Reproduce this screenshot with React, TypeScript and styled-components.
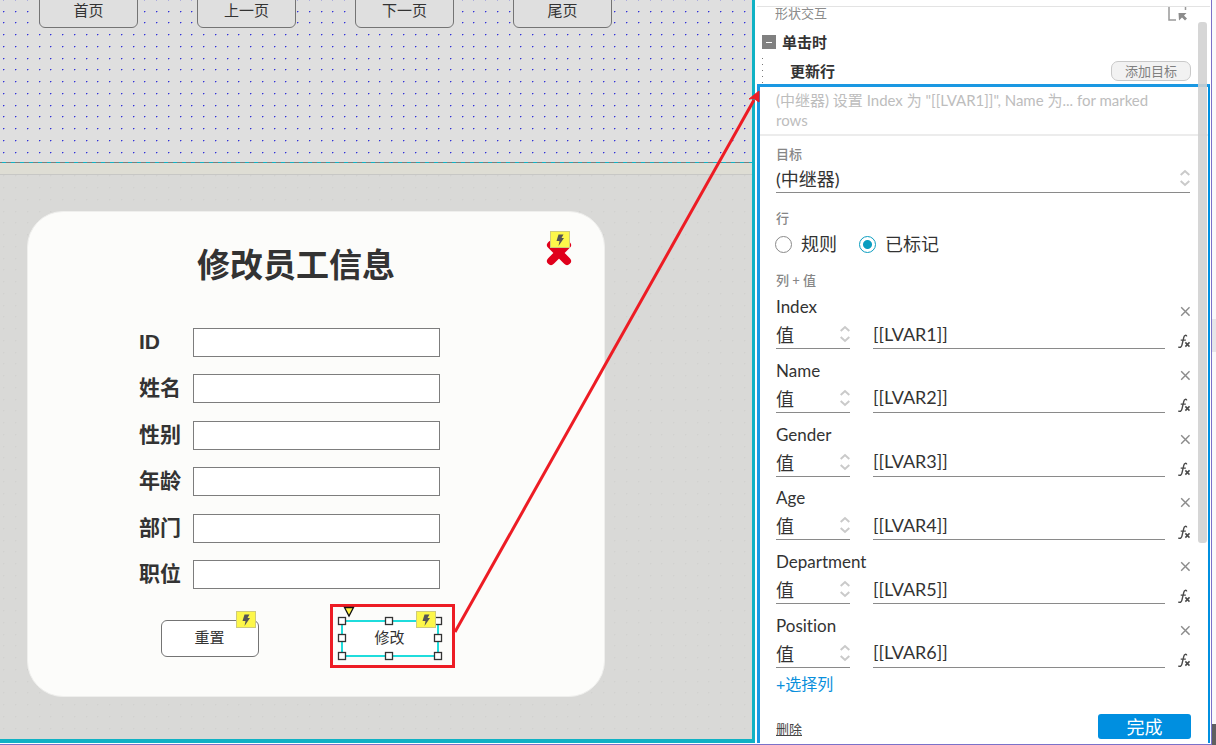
import React from "react";
import styled, { createGlobalStyle } from "styled-components";

const Global = createGlobalStyle`
  * { box-sizing: border-box; }
  body { margin: 0; background: #fff; color: #333; font-family: "Liberation Sans", "Noto Sans CJK SC", sans-serif; }
  button, input, select { font: inherit; color: inherit; margin: 0; padding: 0; }
  h1, h2, h3, p { margin: 0; }
`;

const Shell = styled.div`
  display: flex;
  min-height: 100vh;
`;

const Window = styled.div`
  position: relative;
  flex: 1;
  min-width: 0;
  display: flex;
  padding-bottom: 1px;
  border-right: 1px solid #7b72c9;
  border-bottom: 1px solid #7b72c9;
`;

/* ---------- canvas ---------- */

const Canvas = styled.main`
  position: relative;
  flex: 1;
  min-width: 0;
  display: flex;
  flex-direction: column;
  border-right: 3px solid #10b2c4;
  border-bottom: 4px solid #10b2c4;
  background: #d9d9d7;
`;

const PageArea = styled.section`
  position: relative;
  height: 162px;
  background: #dfdfdf;
`;

const Dots = styled.svg`
  position: absolute;
  inset: 0;
  width: 100%;
  height: 100%;
`;

const Pager = styled.nav`
  position: relative;
  display: flex;
  gap: 59px;
  margin-left: 39px;
  height: 28px;
  align-items: flex-end;
  overflow: hidden;
`;

const CanvasButton = styled.button<{ $selected?: boolean; $page?: boolean }>`
  flex: none;
  width: ${(p) => (p.$page ? 99 : 98)}px;
  height: 37px;
  border: ${(p) => (p.$selected ? "2px solid #1fdcdc" : "1px solid #747474")};
  border-radius: ${(p) => (p.$selected ? 0 : 6)}px;
  background: ${(p) => (p.$page ? "#dfdfdf" : "#fff")};
  font-size: 15px;
  line-height: 20px;
  padding: ${(p) => (p.$page ? "2px 0 0" : "0 1px 2px 0")};
`;

const Guide = styled.svg`
  display: block;
  width: 100%;
  height: 1px;
`;

const Strip = styled.div`
  height: 12px;
  background: #deddd4;
  border-bottom: 1px solid #c7c7c5;
`;

const Backdrop = styled.section`
  position: relative;
  flex: 1;
  padding: 36px 20px 42px 27px;
`;

const Card = styled.form`
  position: relative;
  width: 578px;
  padding: 31px 0 39px 111px;
  border: 1px solid #efefed;
  border-radius: 36px;
  background: #fcfcfa;
`;

const CardTitle = styled.h1`
  margin-left: 58px;
  padding-top: 1px;
  font-size: 33px;
  line-height: 44px;
  font-weight: 700;
`;

const Fields = styled.div`
  display: flex;
  flex-direction: column;
  justify-content: space-between;
  height: 261px;
  margin-top: 40px;
`;

const FieldRow = styled.div`
  display: flex;
  align-items: center;
`;

const FieldLabel = styled.label`
  width: 54px;
  padding-bottom: 1px;
  font-size: 21px;
  line-height: 28px;
  font-weight: 700;
`;

const FieldInput = styled.input`
  width: 247px;
  height: 29px;
  border: 1px solid #7d7d7d;
  background: #fff;
  padding: 0 6px;
`;

const Actions = styled.div`
  display: flex;
  gap: 82px;
  margin: 31px 0 0 22px;
`;

const Slot = styled.div`
  position: relative;
`;

const Bolt = styled.span`
  position: absolute;
  top: -9px;
  right: 3px;
  display: flex;
  align-items: center;
  justify-content: center;
  width: 20px;
  height: 17px;
  border: 1px solid #cfcb7a;
  background: #fdf74a;
`;

const CloseButton = styled.button`
  position: absolute;
  top: 28px;
  right: 31px;
  width: 28px;
  height: 28px;
  border: 0;
  background: none;

  > svg { display: block; }
`;

const Handles = styled.svg`
  position: absolute;
  left: -11px;
  top: -16px;
`;

const Arrow = styled.svg`
  position: absolute;
  right: 448px;
  top: 0;
  pointer-events: none;
`;

/* ---------- interaction panel ---------- */

const Panel = styled.aside`
  position: relative;
  flex: none;
  width: 456px;
  padding: 0 1px 0 2px;
  display: flex;
  flex-direction: column;
  background: #fff;
  font-family: Lato, "Noto Sans CJK SC", sans-serif;
  font-variant-ligatures: none;
`;

const PanelTop = styled.div`
  height: 7px;
  border-bottom: 1px solid #e3e3e3;
`;

const PanelTitle = styled.header`
  display: flex;
  align-items: flex-start;
  justify-content: space-between;
  height: 21px;
  padding: 0 23px 0 18px;

  h2 {
    font-size: 13px;
    line-height: 12px;
    font-weight: 400;
    color: #8c8c8c;
  }
`;

const EventRow = styled.div`
  display: flex;
  align-items: center;
  gap: 6px;
  height: 28px;
  padding-left: 5px;

  h3 { font-size: 15px; line-height: 20px; }
`;

const Collapse = styled.button`
  display: flex;
  align-items: center;
  justify-content: center;
  width: 14px;
  height: 14px;
  border: 0;
  background: #808080;
`;

const ActionRow = styled.div`
  display: flex;
  align-items: center;
  justify-content: space-between;
  height: 28px;
  margin-left: 5px;
  padding: 2px 19px 0 28px;
  background: repeating-linear-gradient(transparent 0 2px, #777 2px 3px, transparent 3px 6px) left top / 1px 100% no-repeat;

  h3 { font-size: 15px; line-height: 20px; }
`;

const AddTarget = styled.button`
  width: 80px;
  height: 20px;
  border: 1px solid #c9c9c9;
  border-radius: 7px;
  background: #f2f2f2;
  color: #808080;
  font-size: 13px;
  line-height: 16px;
`;

const ActionBox = styled.section`
  flex: 1;
  display: flex;
  flex-direction: column;
  border-top: 3px solid #1a98e2;
  border-left: 3px solid #1a98e2;
  border-right: 2px solid #0090e0;
`;

const Summary = styled.p`
  padding: 3px 28px 4px 16px;
  border-bottom: 2px solid #ececec;
  color: #bdbdbd;
  font-size: 15px;
  line-height: 20px;
`;

const Body = styled.div`
  flex: 1;
  display: flex;
  flex-direction: column;
  padding: 9px 18px 4px 16px;
`;

const Caption = styled.label<{ $top?: number }>`
  display: block;
  margin-top: ${(p) => p.$top ?? 0}px;
  font-size: 13px;
  line-height: 18px;
  font-weight: 500;
  color: #868686;
`;

const SelectWrap = styled.div<{ $width?: number }>`
  position: relative;
  display: flex;
  width: ${(p) => (p.$width ? `${p.$width}px` : "auto")};
  border-bottom: 1px solid #8a8a8a;

  svg { position: absolute; right: 0; top: 6px; pointer-events: none; }
`;

const Select = styled.select`
  flex: 1;
  min-width: 0;
  height: 29px;
  padding-top: 3px;
  appearance: none;
  border: 0;
  background: none;
  font-size: 18px;
  line-height: 26px;
`;

const Radios = styled.div`
  display: flex;
  gap: 22px;
  margin: 5px 0 0 -1px;
`;

const RadioLabel = styled.label`
  display: flex;
  align-items: center;
  gap: 9px;
  font-size: 18px;
  line-height: 24px;
`;

const Radio = styled.input`
  appearance: none;
  width: 17px;
  height: 17px;
  border: 1px solid #8a8a8a;
  border-radius: 50%;

  &:checked {
    border-color: #0a9dc0;
    background: radial-gradient(circle, #0a9dc0 4px, transparent 5px);
  }
`;

const Columns = styled.div`
  display: flex;
  flex-direction: column;
  justify-content: space-between;
  height: 372px;
  margin-top: 7px;
`;

const ColumnRow = styled.div`
  display: flex;
  align-items: flex-end;
  height: 53px;
`;

const ColumnLeft = styled.div`
  margin-right: 23px;
  width: 74px;
`;

const ColumnName = styled.label`
  display: block;
  margin-bottom: 2px;
  font-size: 17px;
  line-height: 21px;
`;

const ValueInput = styled.input`
  flex: 1;
  min-width: 0;
  height: 30px;
  border: 0;
  border-bottom: 1px solid #8a8a8a;
  background: none;
  font-size: 18px;
`;

const Tools = styled.div`
  display: flex;
  flex-direction: column;
  justify-content: space-between;
  height: 46px;
  margin-left: 12px;
`;

const IconButton = styled.button`
  display: flex;
  width: 13px;
  border: 0;
  background: none;
`;

const AddColumn = styled.button`
  align-self: flex-start;
  margin-top: 6px;
  border: 0;
  background: none;
  color: #0a8fdc;
  font-size: 16px;
  line-height: 20px;
`;

const Footer = styled.footer`
  display: flex;
  align-items: flex-end;
  justify-content: space-between;
  margin: auto -1px 0 0;
`;

const Delete = styled.a`
  padding-bottom: 2px;
  color: #444;
  font-size: 13px;
  line-height: 16px;
`;

const Done = styled.button`
  width: 93px;
  height: 25px;
  border: 0;
  border-radius: 3px;
  background: #008fe0;
  color: #fff;
  font-size: 18px;
  line-height: 24px;
`;

const ScrollThumb = styled.div`
  position: absolute;
  top: 22px;
  right: 4px;
  width: 9px;
  height: 521px;
  border-radius: 3px;
  background: rgba(208, 208, 208, 0.88);
`;

const Edge = styled.div`
  flex: none;
  display: flex;
  flex-direction: column;
  justify-content: space-between;
  width: 4px;
  padding-top: 319px;
  background: #fafafa;
`;

const EdgeBlock = styled.div<{ $height: number; $color: string }>`
  height: ${(p) => p.$height}px;
  background: ${(p) => p.$color};
`;

const BoltBadge = () => (
  <Bolt>
    <svg width="10" height="12" viewBox="0 0 10 12" aria-hidden="true">
      <path d="M3.500 0.500H8.500L6.500 4H9L3.500 12L4.500 7H1.500Z" fill="#555" />
    </svg>
  </Bolt>
);

const Chevrons = () => (
  <svg width="10" height="18" viewBox="0 0 10 18" fill="none" stroke="#cacaca" strokeWidth="2" aria-hidden="true">
    <path d="M.7 6L5 2L9.300 6M.7 12L5 16L9.300 12" />
  </svg>
);

const DotGrid = ({ id, color, top }: { id: string; color: string; top: number }) => (
  <Dots aria-hidden="true">
    <defs>
      <pattern id={id} x="39" y={top} width="47" height="47" patternUnits="userSpaceOnUse">
        {[0, 12, 24, 35].map((y) =>
          [0, 11, 23, 35].map((x) => (
            <g key={`${x}-${y}`} fill={color}>
              <rect x={x} y={y} width="1" height="1" />
              <rect x={x + 1} y={y} width="1" height="1" opacity=".4" />
              <rect x={x} y={y + 1} width="1" height="1" opacity=".3" />
            </g>
          ))
        )}
      </pattern>
    </defs>
    <rect width="100%" height="100%" fill={`url(#${id})`} />
  </Dots>
);

const fields = ["ID", "姓名", "性别", "年龄", "部门", "职位"];
const columns = ["Index", "Name", "Gender", "Age", "Department", "Position"];
const handlePoints = [[8, 13], [55, 13], [104, 13], [8, 30], [104, 30], [8, 48], [55, 48], [104, 48]];

export default function App() {
  return (
    <>
      <Global />
      <Shell>
        <Window>
          <Canvas>
            <PageArea>
              <DotGrid id="page-dots" color="#3030d8" top={34} />
              <Pager>
                {["首页", "上一页", "下一页", "尾页"].map((name) => (
                  <CanvasButton key={name} type="button" $page>{name}</CanvasButton>
                ))}
              </Pager>
            </PageArea>
            <Guide aria-hidden="true">
              <rect width="100%" height="1" fill="#7a7d7d" />
              <line x1="2" y1=".5" x2="100%" y2=".5" stroke="#10b2c4" strokeDasharray="4 5" />
            </Guide>
            <Strip />
            <Backdrop>
              <DotGrid id="veil-dots" color="#d1d1cf" top={12} />
              <Card onSubmit={(e) => e.preventDefault()}>
                <CardTitle>修改员工信息</CardTitle>
                <CloseButton type="button" aria-label="关闭">
                  <svg width="28" height="28" viewBox="0 0 28 28">
                    <path d="M6 5L22 21M22 5L6 21" stroke="#e0001b" strokeWidth="8" strokeLinecap="round" />
                  </svg>
                  <BoltBadge />
                </CloseButton>
                <Fields>
                  {fields.map((name, i) => (
                    <FieldRow key={name}>
                      <FieldLabel htmlFor={`field-${i}`}>{name}</FieldLabel>
                      <FieldInput id={`field-${i}`} type="text" />
                    </FieldRow>
                  ))}
                </Fields>
                <Actions>
                  <Slot>
                    <CanvasButton type="reset">重置</CanvasButton>
                    <BoltBadge />
                  </Slot>
                  <Slot>
                    <CanvasButton type="submit" $selected>修改</CanvasButton>
                    <Handles width="125" height="64" viewBox="0 0 125 64" aria-hidden="true">
                      <rect x="1.500" y="1.500" width="122" height="61" fill="none" stroke="#ed1c24" strokeWidth="3" />
                      <path d="M14.500 3.500H23.500L19 12Z" fill="#fff04a" stroke="#111" strokeWidth="1.300" />
                      {handlePoints.map(([x, y]) => (
                        <rect key={`${x}-${y}`} x={x + 0.5} y={y + 0.5} width="7" height="7" fill="#fff" stroke="#333" strokeWidth="1.300" />
                      ))}
                    </Handles>
                    <BoltBadge />
                  </Slot>
                </Actions>
              </Card>
            </Backdrop>
          </Canvas>

          <Panel>
            <PanelTop />
            <PanelTitle>
              <h2>形状交互</h2>
              <svg width="19" height="14" viewBox="0 0 19 14" aria-hidden="true">
                <path d="M1 0V13H8M17.500 0V3" fill="none" stroke="#999" strokeWidth="1.500" />
                <path d="M10.500 6H18.500L16 8.500L19 11.500L17 13.500L14 10.500L11 13.500Z" fill="#8c8c8c" />
              </svg>
            </PanelTitle>
            <EventRow>
              <Collapse type="button" aria-label="折叠">
                <svg width="6" height="1"><rect width="6" height="1" fill="#fff" /></svg>
              </Collapse>
              <h3>单击时</h3>
            </EventRow>
            <ActionRow>
              <h3>更新行</h3>
              <AddTarget type="button">添加目标</AddTarget>
            </ActionRow>
            <ActionBox>
              <Summary>(中继器) 设置 Index 为 "[[LVAR1]]", Name 为... for marked rows</Summary>
              <Body>
                <Caption htmlFor="target">目标</Caption>
                <SelectWrap>
                  <Select id="target"><option>(中继器)</option></Select>
                  <Chevrons />
                </SelectWrap>
                <Caption as="div" $top={16}>行</Caption>
                <Radios>
                  <RadioLabel><Radio type="radio" name="rows" />规则</RadioLabel>
                  <RadioLabel><Radio type="radio" name="rows" defaultChecked />已标记</RadioLabel>
                </Radios>
                <Caption as="div" $top={15}>列 + 值</Caption>
                <Columns>
                  {columns.map((name, i) => (
                    <ColumnRow key={name}>
                      <ColumnLeft>
                        <ColumnName htmlFor={`value-${i}`}>{name}</ColumnName>
                        <SelectWrap $width={74}>
                          <Select aria-label={name}><option>值</option></Select>
                          <Chevrons />
                        </SelectWrap>
                      </ColumnLeft>
                      <ValueInput id={`value-${i}`} type="text" defaultValue={`[[LVAR${i + 1}]]`} />
                      <Tools>
                        <IconButton type="button" aria-label="移除">
                          <svg width="14" height="16" viewBox="0 0 14 16">
                            <path d="M4.500 4L13.500 13M13.500 4L4.500 13" stroke="#8c8c8c" strokeWidth="1.500" />
                          </svg>
                        </IconButton>
                        <IconButton type="button" aria-label="函数">
                          <svg width="14" height="16" viewBox="0 0 14 16" fill="none" stroke="#4a4a4a">
                            <path d="M10.500 3C10 1.300 7.900 1.500 7.300 4.100L5.300 12.500C4.800 14.800 3 15.600 1.500 14.200M4 7H9.500" strokeWidth="1.500" />
                            <path d="M9 9.500L13.500 14M13.500 9.500L9 14" strokeWidth="1.700" />
                          </svg>
                        </IconButton>
                      </Tools>
                    </ColumnRow>
                  ))}
                </Columns>
                <AddColumn type="button">+选择列</AddColumn>
                <Footer>
                  <Delete href="#">删除</Delete>
                  <Done type="button">完成</Done>
                </Footer>
              </Body>
            </ActionBox>
            <ScrollThumb />
          </Panel>

          <Arrow width="310" height="640" viewBox="453 0 310 640" aria-hidden="true">
            <path d="M455 632L754 100" stroke="#ed1c24" strokeWidth="3" />
            <path d="M759 91L749 99L754 98.500L759 102Z" fill="#ed1c24" stroke="#ed1c24" />
          </Arrow>
        </Window>
        <Edge>
          <EdgeBlock $height={33} $color="#e6e6e9" />
          <EdgeBlock $height={21} $color="#606060" />
        </Edge>
      </Shell>
    </>
  );
}
